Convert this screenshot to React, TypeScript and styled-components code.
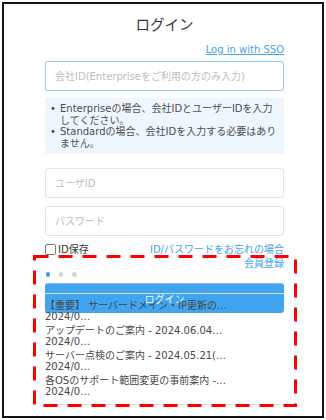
import React from "react";
import styled, { createGlobalStyle } from "styled-components";

const GlobalStyle = createGlobalStyle`
  html, body { margin: 0; padding: 0; background: #fff; }
  body {
    font-family: "DejaVu Sans", "Noto Sans CJK JP", sans-serif;
    -webkit-font-smoothing: antialiased;
  }
  * { box-sizing: border-box; }
`;

const Frame = styled.div`
  position: relative;
  margin: 2px;
  width: 322px;
  height: 416px;
  border: 2px solid #111;
  padding: 10px 0 0 41px;
  overflow: hidden;
  background: #fff;
`;

const Column = styled.div`
  width: 239px;
  display: flex;
  flex-direction: column;
`;

const Title = styled.h1`
  margin: 0;
  font-family: "Noto Sans CJK JP", sans-serif;
  font-size: 14.5px;
  line-height: 20px;
  font-weight: 400;
  color: #333;
  text-align: center;
`;

const LinkRow = styled.div<{ $mt?: number }>`
  display: flex;
  justify-content: flex-end;
  margin-top: ${(p) => p.$mt ?? 0}px;
  font-size: 10px;
  line-height: 14px;
`;

const TextLink = styled.a<{ $underline?: boolean }>`
  color: #4aa3e8;
  text-decoration: ${(p) => (p.$underline ? "underline" : "none")};
  text-underline-offset: 1px;
  cursor: pointer;
  white-space: nowrap;
`;

const Field = styled.input<{ $mt: number; $focused?: boolean }>`
  display: block;
  width: 239px;
  height: 30px;
  margin-top: ${(p) => p.$mt}px;
  padding: 0 9px;
  border: 1px solid ${(p) => (p.$focused ? "#94cdf6" : "#e4e4e4")};
  border-radius: 3px;
  font-family: "DejaVu Sans", "Noto Sans CJK JP", sans-serif;
  font-size: 10px;
  color: #333;
  background: #fff;
  outline: none;
  box-shadow: ${(p) => (p.$focused ? "0 0 1px rgba(100,180,240,0.4)" : "none")};
  &::placeholder {
    color: #bdbdbd;
  }
`;

const InfoBox = styled.div`
  margin-top: 7px;
  padding: 5px 5px 5px 5px;
  background: #eff7fe;
  color: #4d4d4d;
  font-size: 10px;
  line-height: 11.5px;
`;

const InfoItem = styled.div`
  display: flex;
  white-space: nowrap;
`;

const Bullet = styled.span`
  width: 10px;
  flex: none;
`;

const OptionsRow = styled.div`
  display: flex;
  justify-content: space-between;
  align-items: center;
  margin-top: 6.5px;
  font-size: 10px;
  line-height: 14px;
`;

const CheckLabel = styled.label`
  display: flex;
  align-items: center;
  gap: 2px;
  color: #333;
  white-space: nowrap;
`;

const CheckBox = styled.span`
  display: inline-block;
  width: 11px;
  height: 11px;
  border: 1px solid #7a7a7a;
  border-radius: 2px;
  background: #fff;
`;

const Dots = styled.div`
  display: flex;
  gap: 8.8px;
  margin-top: 1.5px;
  padding-left: 0.7px;
  height: 5px;
  align-items: center;
`;

const Dot = styled.span<{ $active?: boolean }>`
  width: 4.5px;
  height: 4.5px;
  border-radius: 50%;
  background: ${(p) => (p.$active ? "#3d9ee8" : "#d6d6d6")};
`;

const LoginButton = styled.button`
  display: block;
  width: 239px;
  height: 30px;
  margin-top: 6px;
  border: none;
  border-top: 1px solid #7cbff0;
  border-radius: 3px;
  background: #40a5ee;
  color: #f4f9ff;
  font-family: "Noto Sans CJK JP", sans-serif;
  font-size: 10px;
  line-height: 14px;
  padding: 0;
`;

const NewsList = styled.ul`
  position: relative;
  list-style: none;
  margin: -20px 0 0;
  padding: 5.5px 0 4.5px;
  border-top: 1px solid #d7dee5;
  border-bottom: 1px solid #d7dee5;
  font-size: 10px;
  line-height: 11px;
  color: #474747;
`;

const NewsItem = styled.li`
  padding-bottom: 3px;
  white-space: nowrap;
`;

const NewsTitle = styled.div``;
const NewsDate = styled.div``;

const Annotation = styled.svg`
  position: absolute;
  left: 29px;
  top: 251px;
  width: 264px;
  height: 152px;
  pointer-events: none;
`;

const news = [
  "【重要】 サーバードメイン・IP更新の…",
  "アップデートのご案内 - 2024.06.04…",
  "サーバー点検のご案内 - 2024.05.21(…",
  "各OSのサポート範囲変更の事前案内 -…",
];

export default function App() {
  return (
    <>
      <GlobalStyle />
      <Frame>
        <Column>
          <Title>ログイン</Title>
          <LinkRow $mt={9}>
            <TextLink $underline>Log in with SSO</TextLink>
          </LinkRow>
          <Field
            $mt={4}
            $focused
            placeholder="会社ID(Enterpriseをご利用の方のみ入力)"
            readOnly
          />
          <InfoBox>
            <InfoItem>
              <Bullet>•</Bullet>
              <span>
                Enterpriseの場合、会社IDとユーザーIDを入力
                <br />
                してください。
              </span>
            </InfoItem>
            <InfoItem>
              <Bullet>•</Bullet>
              <span>
                Standardの場合、会社IDを入力する必要はあり
                <br />
                ません。
              </span>
            </InfoItem>
          </InfoBox>
          <Field $mt={14} placeholder="ユーザID" readOnly />
          <Field $mt={8} placeholder="パスワード" type="password" readOnly />
          <OptionsRow>
            <CheckLabel>
              <CheckBox />
              ID保存
            </CheckLabel>
            <TextLink>ID/パスワードをお忘れの場合</TextLink>
          </OptionsRow>
          <LinkRow>
            <TextLink>会員登録</TextLink>
          </LinkRow>
          <Dots>
            <Dot $active />
            <Dot />
            <Dot />
          </Dots>
          <LoginButton>ログイン</LoginButton>
          <NewsList>
            {news.map((t) => (
              <NewsItem key={t}>
                <NewsTitle>{t}</NewsTitle>
                <NewsDate>2024/0…</NewsDate>
              </NewsItem>
            ))}
          </NewsList>
        </Column>
        <Annotation viewBox="0 0 264 152">
          <rect
            x="1.5"
            y="1.5"
            width="261"
            height="149"
            fill="none"
            stroke="#ff0000"
            strokeWidth="3"
            strokeDasharray="14 10"
          />
        </Annotation>
      </Frame>
    </>
  );
}
